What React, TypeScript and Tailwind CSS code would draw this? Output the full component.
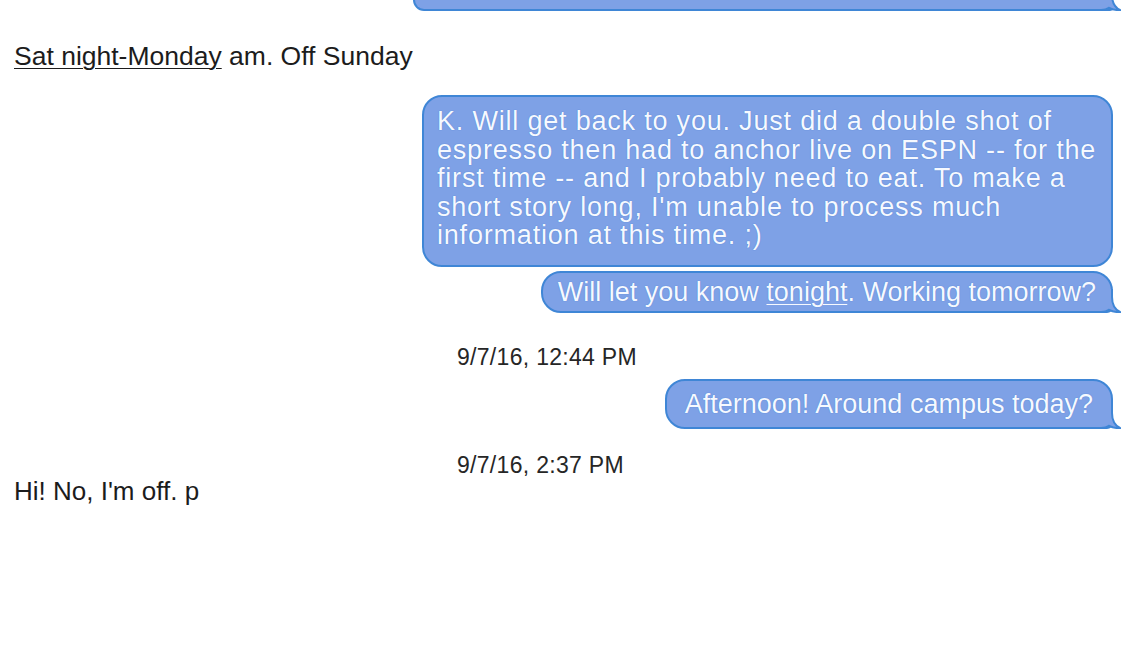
import React from "react";

function Tail() {
  return (
    <svg
      className="absolute right-[-10px] bottom-[-2px] h-[24px] w-[20px]"
      viewBox="0 0 20 24"
      fill="none"
    >
      <path
        d="M0 0 H11 V8 C11 16 14 20.5 19 23 C15 23.3 11 22.5 8 20.8 C6 22.3 3 23 0 23 Z"
        fill="#7ea1e6"
      />
      <path
        d="M11 0 V8 C11 16 14 20.5 19 23 C15 23.3 11 22.5 8 20.8 C6 22.3 3 23 0 23"
        stroke="#3f86d6"
        strokeWidth="2"
      />
    </svg>
  );
}

function Bubble({
  children,
  tail = false,
  className = "",
}: {
  children: React.ReactNode;
  tail?: boolean;
  className?: string;
}) {
  return (
    <div
      className={
        "relative self-end mr-[27px] border-2 border-[#3f86d6] bg-[#7ea1e6] text-[27px] text-[#f6f9ff] [text-shadow:0_0_1px_#3c73c8] " +
        (tail ? "rounded-[20px] rounded-br-[6px] " : "rounded-[20px] ") +
        className
      }
    >
      {children}
      {tail && <Tail />}
    </div>
  );
}

export default function App() {
  return (
    <main className="relative h-[648px] w-[1140px] overflow-hidden bg-white font-['Liberation_Sans',Arial,sans-serif] text-[#1c1c1c]">
      <div className="flex flex-col">
        <div className="relative self-end mr-[27px] h-[11px] w-[700px] rounded-b-[20px] rounded-br-[6px] border-x-2 border-b-2 border-[#3f86d6] bg-[#7ea1e6]">
          <Tail />
        </div>

        <p className="mt-[30px] ml-[14px] text-[26.5px] leading-[30px]">
          <span className="underline decoration-1 underline-offset-[3px]">Sat night-Monday</span> am. Off
          Sunday
        </p>

        <Bubble className="mt-[24px] w-[691px] px-[13px] pt-[10px] pb-[15px] leading-[28.5px] tracking-[0.8px]">
          K. Will get back to you. Just did a double shot of
          <br />
          espresso then had to anchor live on ESPN -- for the
          <br />
          first time -- and I probably need to eat. To make a
          <br />
          short story long, I'm unable to process much
          <br />
          information at this time. ;)
        </Bubble>

        <Bubble tail className="mt-[4px] px-[15px] py-[4px] leading-[30px]">
          Will let you know{" "}
          <span className="underline decoration-1 underline-offset-[3px]">tonight</span>. Working
          tomorrow?
        </Bubble>

        <p className="mt-[31px] ml-[457px] text-[23px] leading-[26px] tracking-[0.3px] text-[#262626]">
          9/7/16, 12:44 PM
        </p>

        <Bubble tail className="mt-[9px] px-[18px] py-[10px] leading-[26px]">
          Afternoon! Around campus today?
        </Bubble>

        <p className="mt-[26px] ml-[457px] text-[23px] leading-[20px] tracking-[0.3px] text-[#262626]">
          9/7/16, 2:37 PM
        </p>

        <p className="mt-[1px] ml-[14px] text-[26px] leading-[30px]">Hi! No, I'm off. p</p>
      </div>
    </main>
  );
}
